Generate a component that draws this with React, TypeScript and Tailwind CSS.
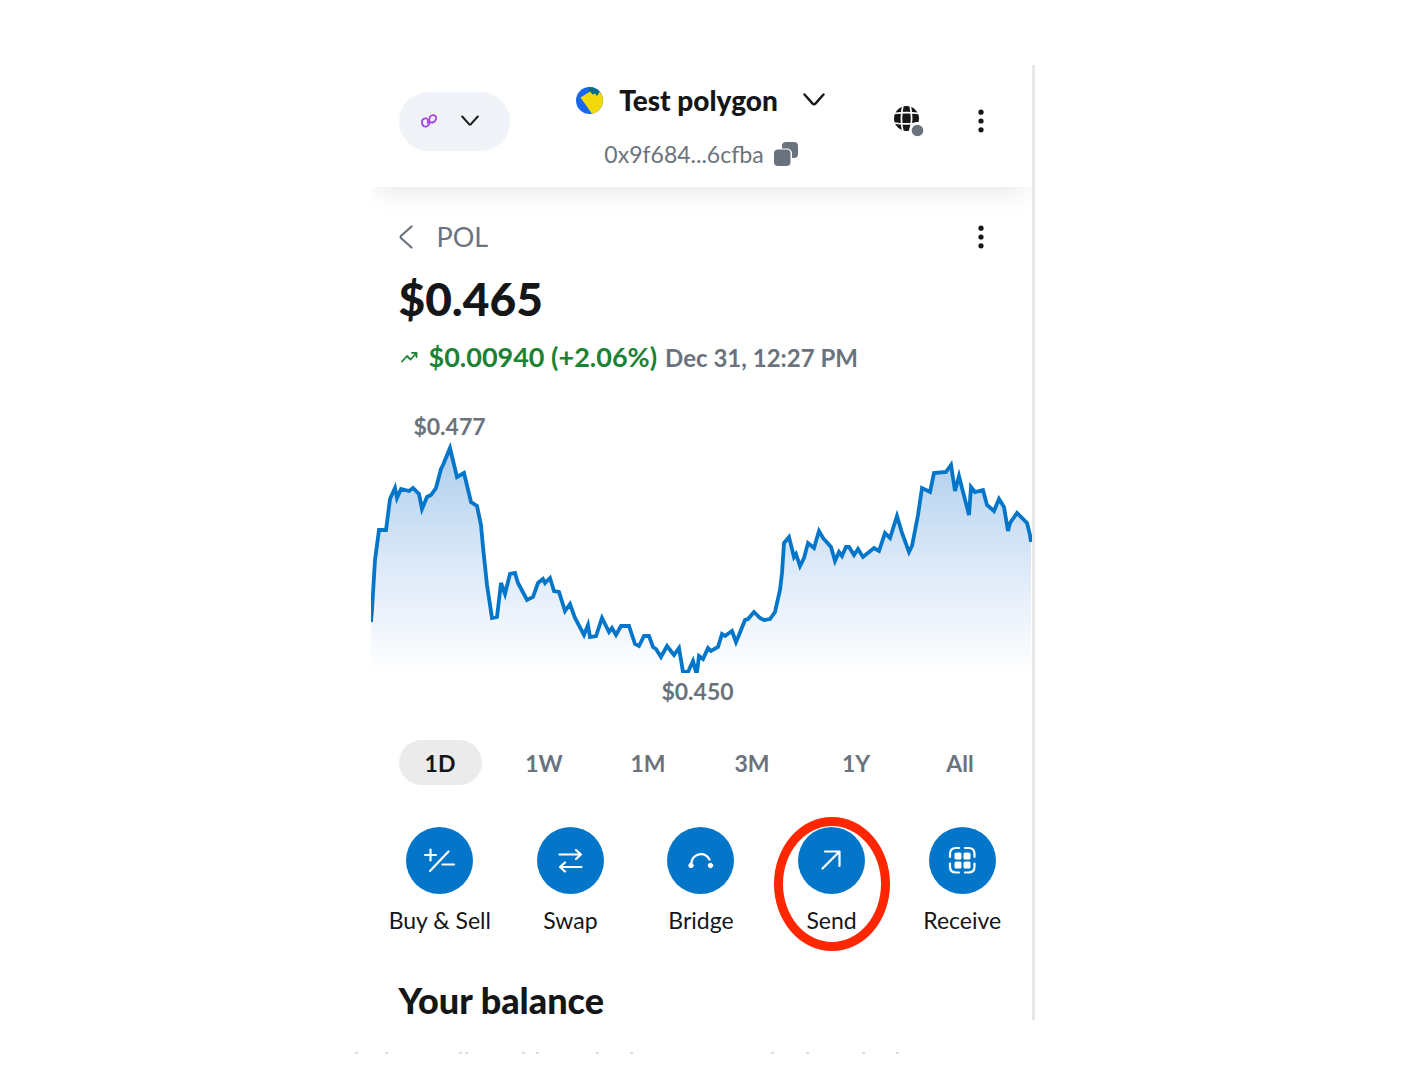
import clsx from "clsx";
import type { ReactNode } from "react";

type Point = [number, number];

const CHART_WIDTH = 661;
const CHART_HEIGHT = 233;

const PRICES: Point[] = [
  [0, 182], [1, 170], [4, 120], [8, 90], [15, 90], [19, 59], [24, 48], [26, 58], [30, 49], [38, 51], [42, 48], [48, 54], [51, 69],
  [56, 57], [60, 55], [65, 48], [70, 29], [72, 25], [79, 8], [86, 37], [93, 33], [100, 62], [106, 66], [110, 85], [112, 107],
  [116, 145], [121, 178], [126, 177], [130, 143], [134, 154], [139, 134], [144, 133], [147, 143], [156, 160], [162, 157],
  [167, 143], [172, 139], [174, 143], [179, 138], [183, 151], [188, 152], [194, 171], [199, 164], [204, 178], [213, 195],
  [217, 185], [219, 197], [225, 196], [231, 178], [238, 192], [241, 188], [245, 195], [250, 186], [258, 186], [264, 204],
  [268, 206], [273, 196], [278, 196], [282, 207], [285, 209], [290, 217], [296, 206], [303, 215], [308, 208], [312, 232],
  [317, 232], [322, 221], [325, 232], [326, 232], [328, 216], [332, 219], [337, 208], [340, 211], [347, 207], [351, 194],
  [354, 196], [361, 191], [365, 202], [368, 195], [374, 180], [377, 179], [383, 172], [389, 178], [393, 180], [399, 179],
  [404, 172], [409, 150], [411, 133], [413, 103], [418, 97], [423, 117], [425, 114], [429, 126], [433, 118], [437, 103],
  [443, 108], [448, 91], [452, 98], [460, 107], [464, 121], [468, 112], [471, 116], [475, 107], [478, 107], [483, 115],
  [487, 109], [492, 117], [503, 108], [508, 111], [514, 93], [519, 98], [526, 76], [531, 93], [538, 112], [541, 106],
  [547, 75], [551, 48], [559, 52], [563, 33], [575, 32], [580, 25], [584, 51], [588, 36], [591, 48], [598, 75], [600, 47],
  [604, 52], [612, 50], [616, 65], [623, 71], [628, 59], [633, 67], [637, 91], [639, 83], [646, 73], [656, 83], [659, 95],
  [660, 102],
];

const RANGES = ["1D", "1W", "1M", "3M", "1Y", "All"];

function ChevronDown({ className }: { className: string }) {
  return (
    <svg viewBox="0 0 22 14" className={className} fill="none" stroke="currentColor" strokeWidth="2.4" strokeLinecap="round" strokeLinejoin="round">
      <path d="M1.5 1.5 9.6 10.6Q11 12 12.4 10.6L20.5 1.5" />
    </svg>
  );
}

function PolygonLogo() {
  return (
    <svg viewBox="0 0 16 14" className="h-3.5 w-4" fill="none" stroke="#a63be0" strokeWidth="1.7" strokeLinejoin="round">
      <path d="M6.500 4.900 5 4.200 2.500 4.900 1 6.800v3l1.300 2.200 2.200.8 2.300-1.100 1.700-1.900V3.500L10 1.800l2.500-.8 2.300 1.200.3 2.800-1.500 2.600-2.300 1-2.200-.6" />
      <path d="M6.800 5v4.800" />
    </svg>
  );
}

function Avatar() {
  return (
    <svg viewBox="0 0 27 27" className="size-[27px]">
      <defs>
        <clipPath id="avatar">
          <circle cx="13.5" cy="13.5" r="13.5" />
        </clipPath>
      </defs>
      <g clipPath="url(#avatar)">
        <rect width="27" height="27" fill="#1866f2" />
        <path d="M12 0h15v12H14z" fill="#0d6b8c" />
        <path d="M4.5 10.5 14 4.5l2.5 3 2.5-1 2 2.5 3-4.5 4 2v21H16.5z" fill="#f2d90a" />
      </g>
    </svg>
  );
}

function CopyIcon() {
  return (
    <svg viewBox="0 0 24 24" className="size-6" fill="#6a737d">
      <rect x="8" y="0" width="16" height="16" rx="4" />
      <rect x="-1" y="6.5" width="19" height="19" rx="5" fill="#fff" />
      <rect x="0" y="7.5" width="16.5" height="16.5" rx="4" />
    </svg>
  );
}

function GlobeIcon() {
  return (
    <svg viewBox="0 0 30 31" className="h-[31px] w-[30px]">
      <circle cx="12.5" cy="12.5" r="12.5" fill="#141618" />
      <g fill="none" stroke="#fff" strokeWidth="1.7">
        <path d="M0 7.5Q12.5 5.8 25 7.5M0 17Q12.5 18.7 25 17" />
        <path d="M8.8 0Q6 12.5 8.8 25M16.2 0Q19 12.5 16.2 25" />
      </g>
      <circle cx="23.5" cy="24.5" r="8.5" fill="#fff" />
      <circle cx="23.5" cy="24.5" r="5.8" fill="#6a737d" />
    </svg>
  );
}

function DotsIcon() {
  return (
    <svg viewBox="0 0 6 24" className="h-6 w-1.5" fill="#141618">
      <circle cx="3" cy="3.2" r="2.6" />
      <circle cx="3" cy="12" r="2.6" />
      <circle cx="3" cy="20.8" r="2.6" />
    </svg>
  );
}

function Header() {
  return (
    <div className="relative z-10 overflow-x-clip">
      <header className="grid h-[122px] grid-cols-[1fr_auto_1fr] items-center bg-white px-7 pb-2.5 shadow-[0_12px_24px_-6px_rgba(0,0,0,0.09)]">
        <button aria-label="Network" className="flex h-[59px] w-[111px] items-center gap-6 rounded-full bg-[#f0f3f7] pl-[22px]">
          <PolygonLogo />
          <ChevronDown className="h-3 w-[18px]" />
        </button>

        <div className="flex flex-col items-center gap-[22px] pt-3">
          <button className="flex items-center text-[28px] leading-8 font-black">
            <Avatar />
            <span className="px-4">Test polygon</span>
            <ChevronDown className="ml-2 h-3.5 w-6" />
          </button>
          <button className="flex items-center gap-2.5 text-[23px] leading-8 text-[#6a737d]">
            0x9f684...6cfba
            <CopyIcon />
          </button>
        </div>

        <div className="flex items-center justify-end gap-[34px]">
          <button aria-label="Connected sites">
            <GlobeIcon />
          </button>
          <button aria-label="Account options" className="flex w-[46px] justify-center">
            <DotsIcon />
          </button>
        </div>
      </header>
    </div>
  );
}

function ChartLabel({ x, className, children }: { x: number; className: string; children: ReactNode }) {
  return (
    <span
      className={clsx("absolute -translate-x-1/2 text-[23px] leading-7 font-bold text-[#6a737d]", className)}
      style={{ left: `${(x / CHART_WIDTH) * 100}%` }}
    >
      {children}
    </span>
  );
}

function PriceChart() {
  const line = PRICES.map(([x, y]) => `${x},${y}`).join(" L");
  return (
    <div className="relative mt-[66px]">
      <ChartLabel x={79} className="bottom-full">$0.477</ChartLabel>
      <svg viewBox={`0 0 ${CHART_WIDTH} ${CHART_HEIGHT}`} className="block w-full">
        <defs>
          <linearGradient id="area" x1="0" y1="0" x2="0" y2="1">
            <stop offset="0" stopColor="#0369c4" stopOpacity="0.33" />
            <stop offset="0.5" stopColor="#1a6fd0" stopOpacity="0.16" />
            <stop offset="1" stopColor="#1a6fd0" stopOpacity="0" />
          </linearGradient>
        </defs>
        <path d={`M${line} L660,${CHART_HEIGHT} L0,${CHART_HEIGHT}Z`} fill="url(#area)" />
        <path d={`M${line}`} fill="none" stroke="#0376c9" strokeWidth="3.8" />
      </svg>
      <ChartLabel x={327} className="top-full mt-1">$0.450</ChartLabel>
    </div>
  );
}

const ACTIONS = [
  {
    label: "Buy & Sell",
    icon: <path d="M2 11h11M7.5 5.5v11M7 27 25.5 7.5M19.5 20.5H31" />,
  },
  {
    label: "Swap",
    icon: <path d="M5.5 10.5H27M22 6l5 4.5-5 4.5M27.5 23H6M11 18.5 6 23l5 4.5" />,
  },
  {
    label: "Bridge",
    icon: (
      <>
        <path d="M7 20.5C8.5 8 21 7.5 25.5 15.5" />
        <circle cx="7" cy="21.5" r="2.2" fill="currentColor" strokeWidth="1" />
        <circle cx="26.5" cy="21.5" r="2.2" fill="currentColor" strokeWidth="1" />
      </>
    ),
  },
  {
    label: "Send",
    icon: <path d="M7.5 24.5 24.5 7.5M10 7.5h14.5V22" />,
  },
  {
    label: "Receive",
    icon: (
      <>
        <path d="M4 13v-3Q4 4 10 4h3M19 4h3.5q6 0 6 6v3M28.5 19.5v3q0 6-6 6H19M13 28.5h-3q-6 0-6-6v-3" />
        <g fill="currentColor" stroke="none">
          <rect x="8.5" y="8.5" width="7" height="7" rx="1.5" />
          <rect x="17.5" y="8.5" width="7" height="7" rx="1.5" />
          <rect x="8.5" y="17.5" width="7" height="7" rx="1.5" />
          <rect x="17.5" y="17.5" width="7" height="7" rx="1.5" />
        </g>
      </>
    ),
  },
];

function Actions() {
  return (
    <div className="mt-[42px] grid grid-cols-5 px-1">
      {ACTIONS.map(({ label, icon }) => (
        <button key={label} className="relative flex flex-col items-center gap-2.5 text-[23px] leading-8">
          <span className="flex size-[67px] items-center justify-center rounded-full bg-[#0376c9] text-white">
            <svg viewBox="0 0 33 33" className="size-[33px]" fill="none" stroke="currentColor" strokeWidth="2.2" strokeLinecap="round" strokeLinejoin="round">
              {icon}
            </svg>
          </span>
          {label}
          {label === "Send" && <span className="absolute -top-2.5 h-[134px] w-[116px] rounded-[50%] border-[9px] border-[#ff2600]" />}
        </button>
      ))}
    </div>
  );
}

export default function App() {
  return (
    <div className="bg-white pt-[65px] pr-2.5 font-['Lato',sans-serif] text-[#141618]">
      <div className="mx-auto w-full max-w-[664px]">
        <div className="border-r-[3px] border-[#e6e8ea]">
          <Header />

          <main>
            <div className="px-7 pt-[34px]">
              <div className="flex items-center justify-between">
                <button className="flex items-center gap-6 text-[27px] leading-8 text-[#6a737d]">
                  <svg viewBox="0 0 14 24" className="h-6 w-3.5" fill="none" stroke="currentColor" strokeWidth="2.2" strokeLinecap="round" strokeLinejoin="round">
                    <path d="M12.5 1.5 2.2 10.8Q1 12 2.2 13.2L12.5 22.5" />
                  </svg>
                  POL
                </button>
                <button aria-label="Token options" className="flex w-[46px] justify-center">
                  <DotsIcon />
                </button>
              </div>

              <h1 className="mt-[18px] text-[46px] leading-14 font-black">$0.465</h1>

              <p className="mt-3.5 flex items-baseline gap-2 text-[27px] leading-8 font-bold text-[#1c8234]">
                <span className="flex items-baseline gap-2.5">
                  <svg viewBox="0 0 18 12" className="h-3 w-5 self-center" fill="none" stroke="currentColor" strokeWidth="1.8" strokeLinecap="round" strokeLinejoin="round">
                    <path d="M2 10.5 7 5l3.5 3.5L16.5 2M12 1.8h4.5V6" />
                  </svg>
                  $0.00940 (+2.06%)
                </span>
                <span className="text-2xl leading-8 text-[#6a737d]">Dec 31, 12:27 PM</span>
              </p>
            </div>

            <PriceChart />

            <div className="mt-[67px] flex justify-between pr-[30px] pl-7">
              {RANGES.map((range, i) => (
                <button
                  key={range}
                  className={clsx(
                    "h-[45px] w-[83px] rounded-full text-[23px] leading-7 font-bold",
                    i === 0 ? "bg-[#ebebeb]" : "text-[#6a737d]",
                  )}
                >
                  {range}
                </button>
              ))}
            </div>

            <Actions />

            <h2 className="mt-11 pl-7 text-[36px] leading-10 font-black">Your balance</h2>
          </main>
        </div>

        {/* tops of the next line, cut off by the page edge */}
        <svg viewBox="0 0 664 2" className="mt-8 block w-full overflow-visible" stroke="#d4d4d4" strokeWidth="1.5">
          <path d="M-16 1h3M14 1h3M88 1h3M94 1h3M151 1h3M165 1h3M225 1h3M259 1h3M400 1h3M435 1h3M491 1h3M525 1h3" />
        </svg>
      </div>
    </div>
  );
}
